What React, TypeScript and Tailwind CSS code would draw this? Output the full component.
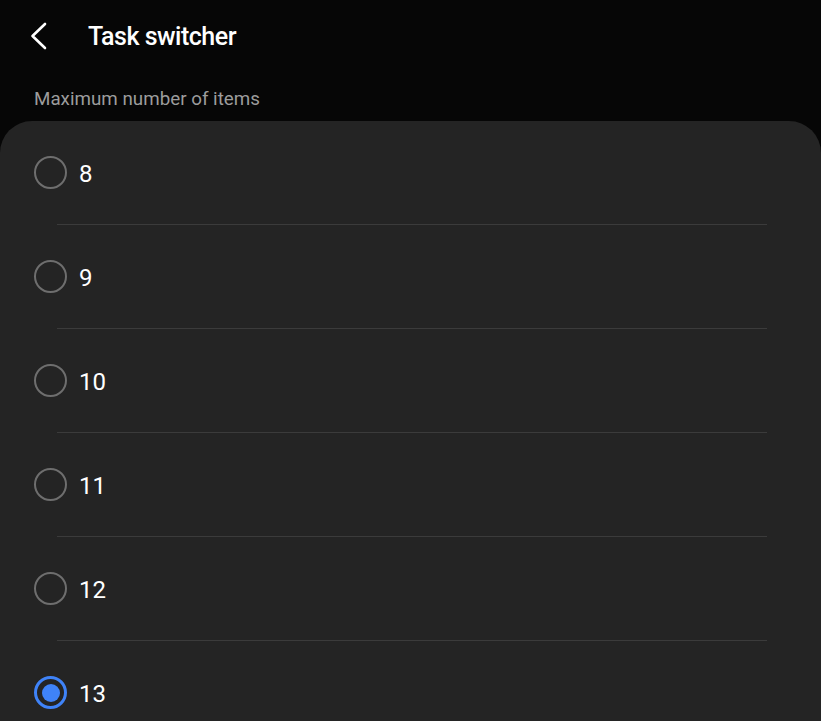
import React from "react";

const items = ["8", "9", "10", "11", "12", "13"];
const selected = "13";

export default function App() {
  return (
    <div className="w-[821px] h-[721px] overflow-hidden bg-[#060606] text-white" style={{ fontFamily: "Roboto, 'Noto Sans', sans-serif" }}>
      <div className="h-[72px] flex items-center">
        <div className="w-[88px] h-full flex items-center">
          <svg width="88" height="72" viewBox="0 0 88 72">
            <path d="M45 24 L32.5 36 L45 48" fill="none" stroke="#ffffff" strokeWidth="2.6" strokeLinecap="round" strokeLinejoin="round" />
          </svg>
        </div>
        <div className="text-[25px] font-medium leading-[32px] pt-[2px] tracking-[-0.5px]">Task switcher</div>
      </div>
      <div className="h-[49px] pt-[15px] pl-[34px] text-[18.8px] leading-[24px] text-[#9c9c9c]">Maximum number of items</div>
      <div className="bg-[#242424] rounded-t-[32px] h-[600px]">
        {items.map((it, i) => (
          <div key={it}>
            {i > 0 && <div className="ml-[57px] mr-[54px] h-px bg-[#3b3b3b]" />}
            <div className="h-[103px] flex items-center pl-[34px] gap-[12px]">
              {it === selected ? (
                <div className="w-[33px] h-[33px] rounded-full border-[3px] border-[#3f83f8] flex items-center justify-center">
                  <div className="w-[18px] h-[18px] rounded-full bg-[#3f83f8]" />
                </div>
              ) : (
                <div className="w-[33px] h-[33px] rounded-full border-[2.5px] border-[#6e6e6e]" />
              )}
              <div className="text-[24px] leading-[30px] pt-[2px] text-white">{it}</div>
            </div>
          </div>
        ))}
      </div>
    </div>
  );
}
